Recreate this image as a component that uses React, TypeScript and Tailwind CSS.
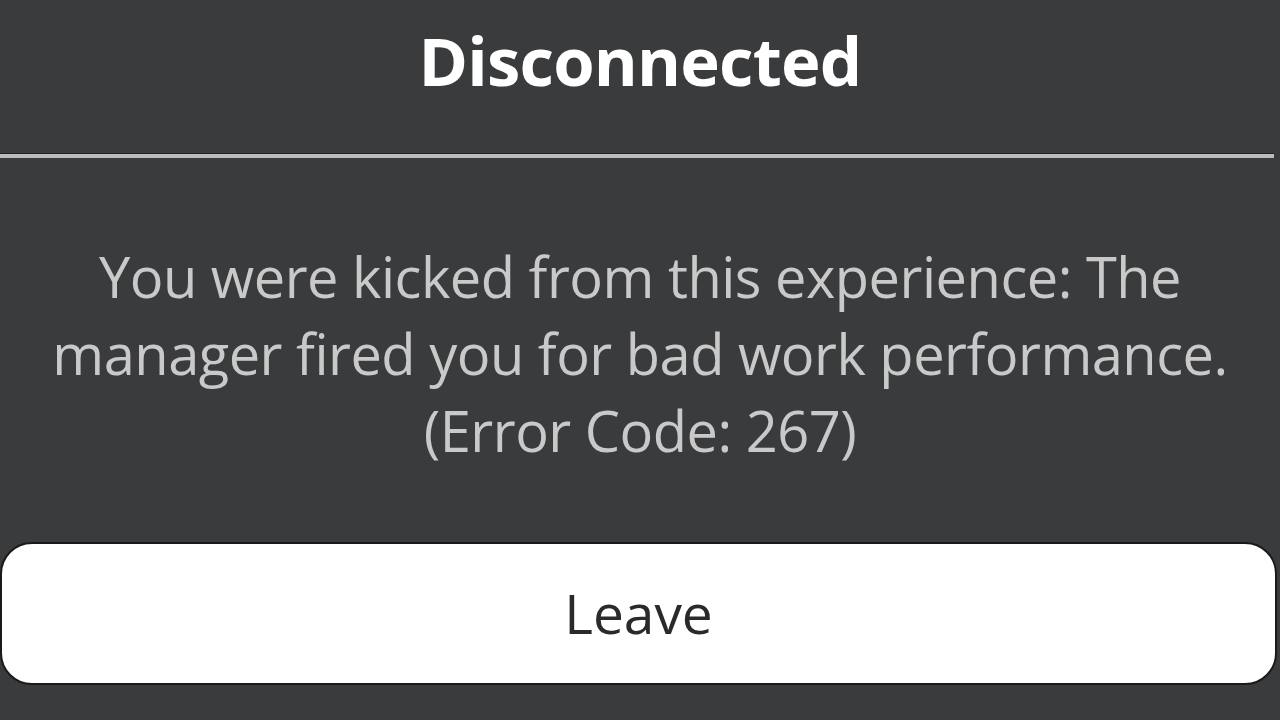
export default function App() {
  return (
    <div
      className="w-[1280px] h-[720px] bg-[#393b3d] flex flex-col overflow-hidden"
      style={{ fontFamily: "'Open Sans', 'Noto Sans', sans-serif" }}
    >
      <div className="h-[128px] flex items-center justify-center pb-[8px]">
        <h1 className="text-[67px] font-bold text-white leading-none tracking-[-0.8px]">Disconnected</h1>
      </div>
      <div className="mt-[25px] w-[1274px] h-[5px] bg-[#b9bbbd] border-t border-[#1f2123]" />
      <div className="mt-[80px] text-center text-[#c9c9c9] text-[56px] leading-[77px] tracking-[-0.5px] whitespace-nowrap">
        <p>You were kicked from this experience: The</p>
        <p>manager fired you for bad work performance.</p>
        <p>(Error Code: 267)</p>
      </div>
      <div className="mt-[73px] w-[1277px] h-[143px] bg-white rounded-[32px] border-2 border-[#1a1a1a] flex items-center justify-center">
        <span className="text-[55px] text-[#2a2a2a]">Leave</span>
      </div>
    </div>
  );
}
